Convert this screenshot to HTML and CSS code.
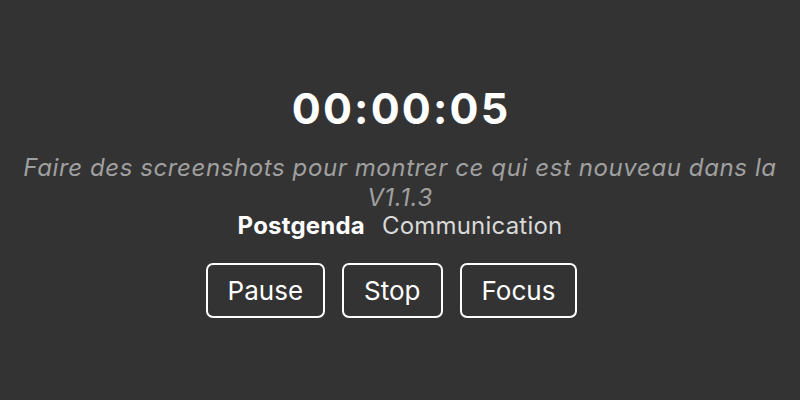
FILE: index.html
```html
<!DOCTYPE html>
<html lang="fr">
<head>
<meta charset="utf-8">
<link rel="stylesheet" href="styles.css">
</head>
<body>
<main class="timer">
  <div class="clock">00:00:05</div>
  <p class="task">Faire des screenshots pour montrer ce qui est nouveau dans la V1.1.3</p>
  <div class="meta"><span class="project">Postgenda</span><span class="category">Communication</span></div>
  <div class="actions">
    <button class="btn">Pause</button>
    <button class="btn">Stop</button>
    <button class="btn">Focus</button>
  </div>
</main>
</body>
</html>
```

FILE: styles.css
```css
html, body {
  margin: 0;
  height: 100%;
}
body {
  background: #333333;
  color: #ffffff;
  font-family: Inter, "Noto Sans", sans-serif;
  display: flex;
  align-items: center;
  justify-content: center;
}
.timer {
  display: flex;
  flex-direction: column;
  align-items: center;
  text-align: center;
  width: 100%;
}
.clock {
  font-size: 43px;
  font-weight: 700;
  line-height: 50px;
  letter-spacing: 2.2px;
  margin-right: -2.2px;
}
.task {
  margin: 20px 0 0;
  font-size: 24px;
  line-height: 30px;
  letter-spacing: 0.6px;
  font-style: italic;
  color: #a0a0a0;
}
.meta {
  display: flex;
  gap: 17px;
  font-size: 24px;
  line-height: 26px;
  letter-spacing: 0.2px;
}
.project {
  font-weight: 700;
  color: #ffffff;
}
.category {
  color: #d9d9d9;
}
.actions {
  display: flex;
  gap: 17px;
  margin-top: 24px;
  padding-right: 17px;
}
.btn {
  font-family: inherit;
  font-size: 26px;
  color: #ffffff;
  background: transparent;
  border: 2px solid #ffffff;
  border-radius: 7px;
  height: 55px;
  padding: 0 20px;
}
.btn-wide {
  padding: 0 22px;
}
```
